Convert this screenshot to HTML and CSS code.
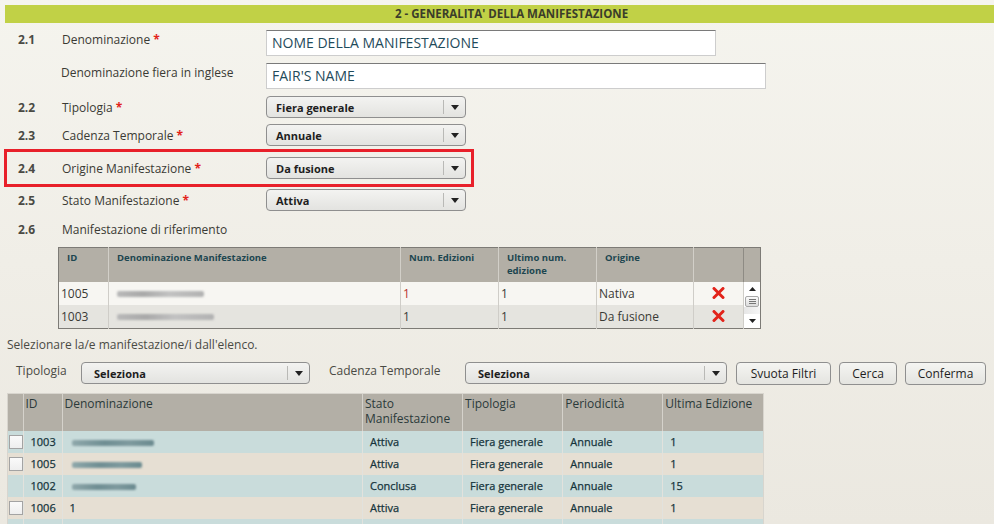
FILE: index.html
```html
<!DOCTYPE html>
<html lang="it">
<head>
<meta charset="utf-8">
<title>Generalità della manifestazione</title>
<link rel="stylesheet" href="styles.css">
</head>
<body>
<div class="page">
  <div class="section-bar"><span>2 - GENERALITA' DELLA MANIFESTAZIONE</span></div>

  <div class="form">
    <div class="row row-input first">
      <span class="num">2.1</span>
      <span class="label">Denominazione <span class="req">*</span></span>
      <div class="input w450">NOME DELLA MANIFESTAZIONE</div>
    </div>
    <div class="row row-input">
      <span class="num"></span>
      <span class="label alt">Denominazione fiera in inglese</span>
      <div class="input w500">FAIR'S NAME</div>
    </div>
    <div class="row row-select r22">
      <span class="num">2.2</span>
      <span class="label">Tipologia <span class="req">*</span></span>
      <div class="select w200"><span class="val">Fiera generale</span><span class="arrow"></span></div>
    </div>
    <div class="row row-select r23">
      <span class="num">2.3</span>
      <span class="label">Cadenza Temporale <span class="req">*</span></span>
      <div class="select w200"><span class="val">Annuale</span><span class="arrow"></span></div>
    </div>
    <div class="row row-select highlight">
      <span class="num">2.4</span>
      <span class="label">Origine Manifestazione <span class="req">*</span></span>
      <div class="select w200"><span class="val">Da fusione</span><span class="arrow"></span></div>
    </div>
    <div class="row row-select r25">
      <span class="num">2.5</span>
      <span class="label">Stato Manifestazione <span class="req">*</span></span>
      <div class="select w200"><span class="val">Attiva</span><span class="arrow"></span></div>
    </div>
    <div class="row row-text">
      <span class="num">2.6</span>
      <span class="label">Manifestazione di riferimento</span>
    </div>
  </div>

  <table class="ref-table">
    <colgroup>
      <col class="c-id"><col class="c-den"><col class="c-num"><col class="c-ult"><col class="c-ori"><col class="c-del"><col class="c-scr">
    </colgroup>
    <thead>
      <tr>
        <th>ID</th>
        <th>Denominazione Manifestazione</th>
        <th>Num. Edizioni</th>
        <th>Ultimo num. edizione</th>
        <th>Origine</th>
        <th></th>
        <th class="scr-head"></th>
      </tr>
    </thead>
    <tbody>
      <tr class="odd">
        <td>1005</td>
        <td><span class="blur b87"></span></td>
        <td class="red">1</td>
        <td>1</td>
        <td>Nativa</td>
        <td class="del"><svg width="13" height="12" viewBox="0 0 13 12"><path d="M2 1.5 L11 10.5 M11 1.5 L2 10.5" stroke="#e2231a" stroke-width="3" stroke-linecap="round"/></svg></td>
        <td class="scroll" rowspan="2">
          <div class="sb">
            <div class="sb-btn"><svg width="7" height="4" viewBox="0 0 7 4"><path d="M0 4 L3.5 0 L7 4Z" fill="#222"/></svg></div>
            <div class="sb-thumb"><span></span><span></span><span></span></div>
            <div class="sb-track"></div>
            <div class="sb-btn"><svg width="7" height="4" viewBox="0 0 7 4"><path d="M0 0 L3.5 4 L7 0Z" fill="#222"/></svg></div>
          </div>
        </td>
      </tr>
      <tr class="even">
        <td>1003</td>
        <td><span class="blur b97"></span></td>
        <td>1</td>
        <td>1</td>
        <td>Da fusione</td>
        <td class="del"><svg width="13" height="12" viewBox="0 0 13 12"><path d="M2 1.5 L11 10.5 M11 1.5 L2 10.5" stroke="#e2231a" stroke-width="3" stroke-linecap="round"/></svg></td>
      </tr>
    </tbody>
  </table>

  <p class="hint">Selezionare la/e manifestazione/i dall'elenco.</p>

  <div class="filters">
    <span class="f-label">Tipologia</span>
    <div class="select f-tip"><span class="val">Seleziona</span><span class="arrow"></span></div>
    <span class="f-label f-cad">Cadenza Temporale</span>
    <div class="select f-cadsel"><span class="val">Seleziona</span><span class="arrow"></span></div>
    <button class="btn b-svuota">Svuota Filtri</button>
    <button class="btn b-cerca">Cerca</button>
    <button class="btn b-conf">Conferma</button>
  </div>

  <div class="list-wrap">
    <table class="list">
      <colgroup>
        <col class="l-chk"><col class="l-id"><col class="l-den"><col class="l-c"><col class="l-c"><col class="l-c"><col class="l-c">
      </colgroup>
      <thead>
        <tr>
          <th></th>
          <th>ID</th>
          <th>Denominazione</th>
          <th>Stato Manifestazione</th>
          <th>Tipologia</th>
          <th>Periodicità</th>
          <th>Ultima Edizione</th>
        </tr>
      </thead>
      <tbody>
        <tr class="teal">
          <td class="chk"><span class="box"></span></td>
          <td>1003</td>
          <td><span class="blur dark b82"></span></td>
          <td>Attiva</td>
          <td>Fiera generale</td>
          <td>Annuale</td>
          <td>1</td>
        </tr>
        <tr class="beige">
          <td class="chk"><span class="box"></span></td>
          <td>1005</td>
          <td><span class="blur dark b70"></span></td>
          <td>Attiva</td>
          <td>Fiera generale</td>
          <td>Annuale</td>
          <td>1</td>
        </tr>
        <tr class="teal">
          <td class="chk"></td>
          <td>1002</td>
          <td><span class="blur dark b64"></span></td>
          <td>Conclusa</td>
          <td>Fiera generale</td>
          <td>Annuale</td>
          <td>15</td>
        </tr>
        <tr class="beige">
          <td class="chk"><span class="box"></span></td>
          <td>1006</td>
          <td>1</td>
          <td>Attiva</td>
          <td>Fiera generale</td>
          <td>Annuale</td>
          <td>1</td>
        </tr>
        <tr class="teal">
          <td class="chk"></td>
          <td></td>
          <td></td>
          <td></td>
          <td></td>
          <td></td>
          <td></td>
        </tr>
      </tbody>
    </table>
  </div>
</div>
</body>
</html>
```

FILE: styles.css
```css
* { box-sizing: border-box; }

html, body {
  margin: 0;
  padding: 0;
  height: 100%;
  overflow: hidden;
}

body {
  background: linear-gradient(#f5f4ee, #ebe8e0);
  font-family: "Open Sans", "Liberation Sans", sans-serif;
  color: #3a3a34;
}

.page {
  padding-top: 5px;
}

.section-bar {
  margin-left: 5px;
  height: 18px;
  background: #c1d146;
  text-align: center;
  padding-left: 24px;
  font-weight: bold;
  font-size: 11.5px;
  line-height: 18px;
  color: #3b3d2a;
}

.form {
  display: flex;
  flex-direction: column;
}

.row {
  display: grid;
  grid-template-columns: 44px 204px auto;
  align-items: center;
  justify-items: start;
  padding-left: 18px;
}

.num {
  font-size: 12px;
  font-weight: bold;
  color: #4a4a44;
  text-align: left;
}

.label {
  font-size: 12px;
  color: #3a3a34;
  text-align: left;
  white-space: nowrap;
}

.label.alt { margin-left: -1px; }

.req {
  color: #e2231a;
  font-size: 12px;
  font-weight: bold;
}

.row-input { height: 26px; margin-top: 7px; align-items: start; }
.row-input .num, .row-input .label { padding-top: 1px; }

.input {
  height: 26px;
  background: #fff;
  border: 1px solid #cdcdcd;
  border-top-color: #7a7a7a;
  font-size: 14px;
  color: #1f4b5b;
  padding: 0 5px;
  line-height: 24px;
}
.w450 { width: 450px; }
.w500 { width: 500px; }

.row-select { height: 22px; }
.r22 { margin-top: 7px; }
.r23 { margin-top: 6px; }
.r25 { margin-top: 2px; }

.highlight {
  margin-top: 3px;
  margin-left: 4px;
  width: 470px;
  height: 38px;
  border: 3px solid #e8202a;
  padding-left: 11px;
}

.select {
  height: 22px;
  border: 1px solid #8f8f8f;
  border-radius: 4px;
  background: linear-gradient(#f3f3f1, #e3e3e0);
  display: flex;
  align-items: center;
  font-size: 11px;
  font-weight: bold;
  color: #1e1e1e;
  padding-left: 9px;
}
.w200 { width: 200px; }

.select .val { flex: 1; text-align: left; }

.select .arrow {
  width: 22px;
  height: 14px;
  border-left: 1px solid #b9b9b6;
  position: relative;
}
.select .arrow::after {
  content: "";
  position: absolute;
  left: 7px;
  top: 5px;
  border-left: 4px solid transparent;
  border-right: 4px solid transparent;
  border-top: 5px solid #222;
}

.row-text { height: 18px; margin-top: 9px; }

/* reference table */
.ref-table {
  margin: 9px 0 0 58px;
  border-collapse: collapse;
  border: 1px solid #7d7b76;
  table-layout: fixed;
  width: 702px;
}
.c-id { width: 50px; }
.c-den { width: 292px; }
.c-num { width: 98px; }
.c-ult { width: 98px; }
.c-ori { width: 97px; }
.c-del { width: 50px; }
.c-scr { width: 17px; }

.ref-table th {
  height: 34px;
  background: #b3afa6;
  border-left: 1px solid #d2cfc8;
  vertical-align: top;
  text-align: left;
  font-size: 9.5px;
  font-weight: bold;
  color: #1d4650;
  padding: 3px 8px 0;
  line-height: 13px;
}
.ref-table th:first-child { border-left: none; }
.ref-table th.scr-head { padding: 0; border-left: 1px solid #8e8b84; }

.ref-table td {
  height: 23px;
  font-size: 12px;
  color: #3a3a36;
  padding: 0 2px;
  border-left: 1px solid #cfcdc8;
  white-space: nowrap;
}
.ref-table td:first-child { border-left: none; }
.ref-table tr.odd td { background: #f7f6f2; }
.ref-table tr.even td { background: #e5e4df; }
.ref-table td.red { color: #b8322e; }
.ref-table td.del { text-align: center; padding: 0; }
.ref-table td.del svg { display: block; margin: 0 auto; }
.ref-table td.scroll {
  padding: 0;
  background: #fff;
  vertical-align: top;
}

.sb {
  display: flex;
  flex-direction: column;
  height: 46px;
  background: #fff;
}
.sb-btn {
  height: 14px;
  display: flex;
  align-items: center;
  justify-content: center;
  background: #fff;
}
.sb-thumb {
  height: 11px;
  margin: 0 1px;
  border: 1px solid #a8a8a8;
  border-radius: 2px;
  background: linear-gradient(#fafafa, #dcdcdc);
  display: flex;
  flex-direction: column;
  justify-content: center;
  align-items: center;
  gap: 1px;
}
.sb-thumb span {
  width: 7px;
  height: 1px;
  background: #777;
}
.sb-track { flex: 1; background: linear-gradient(90deg, #e6e6e6, #f6f6f6); }

.blur {
  display: inline-block;
  height: 6px;
  vertical-align: middle;
  background: linear-gradient(90deg, #b9b9b9, #a9a9a9 30%, #c2c2c2 60%, #b2b2b2);
  filter: blur(1px);
  border-radius: 2px;
  margin-left: 6px;
}
.blur.dark {
  background: linear-gradient(90deg, #8fa8ab, #6f8e93 40%, #7e9a9e 70%, #6a8a8f);
  margin-left: 2px;
}
.b87 { width: 87px; }
.b97 { width: 97px; }
.b82 { width: 82px; }
.b70 { width: 70px; }
.b64 { width: 64px; }

.hint {
  margin: 8px 0 0 7px;
  font-size: 12px;
  color: #4a4a44;
  line-height: 16px;
}

.filters {
  display: flex;
  align-items: center;
  margin-top: 9px;
  height: 23px;
}
.f-label {
  font-size: 12px;
  color: #4a4a44;
  margin-left: 16px;
  width: 65px;
  align-self: flex-start;
  margin-top: 0;
}
.f-cad {
  margin-left: 19px;
  width: 136px;
}
.f-tip { width: 229px; height: 22px; padding-left: 12px; }
.f-cadsel { width: 262px; height: 22px; padding-left: 12px; }

.btn {
  height: 23px;
  border: 1px solid #8f8f8f;
  border-radius: 4px;
  background: linear-gradient(#f5f5f2, #e4e4e0);
  font-family: inherit;
  font-size: 12px;
  color: #1e1e1e;
  padding: 0;
  margin-left: 8px;
}
.b-svuota { width: 95px; margin-left: 9px; }
.b-cerca { width: 58px; }
.b-conf { width: 81px; }

.list-wrap {
  margin: 8px 0 0 7px;
  width: 757px;
  border: 1px solid #d8d5ce;
  border-right-width: 2px;
  border-bottom: none;
}

.list {
  border-collapse: collapse;
  table-layout: fixed;
  width: 755px;
}
.l-chk { width: 15px; }
.l-id { width: 39px; }
.l-den { width: 300px; }
.l-c { width: 100px; }

.list th {
  height: 37px;
  background: #b3afa6;
  border-left: 1px solid #d5d2cb;
  text-align: left;
  vertical-align: top;
  font-size: 12px;
  font-weight: normal;
  color: #2b3a3a;
  padding: 2px 2px 0 2px;
  line-height: 15px;
}
.list th:first-child { border-left: none; }

.list td {
  height: 22px;
  border-left: 1px solid #e2e2dd;
  font-size: 11px;
  font-weight: normal;
  color: #15343b;
  -webkit-text-stroke: 0.25px #15343b;
  padding: 0 7px;
  white-space: nowrap;
}
.list td:first-child { border-left: none; }
.list td.chk { padding: 0 0 0 1px; }
.list tr.teal td { background: #c9dcdb; }
.list tr.beige td { background: #e6dfd3; }

.box {
  display: block;
  width: 14px;
  height: 14px;
  background: linear-gradient(#fafafa, #eeeeee);
  border: 1px solid #a3a3a3;
}
```
